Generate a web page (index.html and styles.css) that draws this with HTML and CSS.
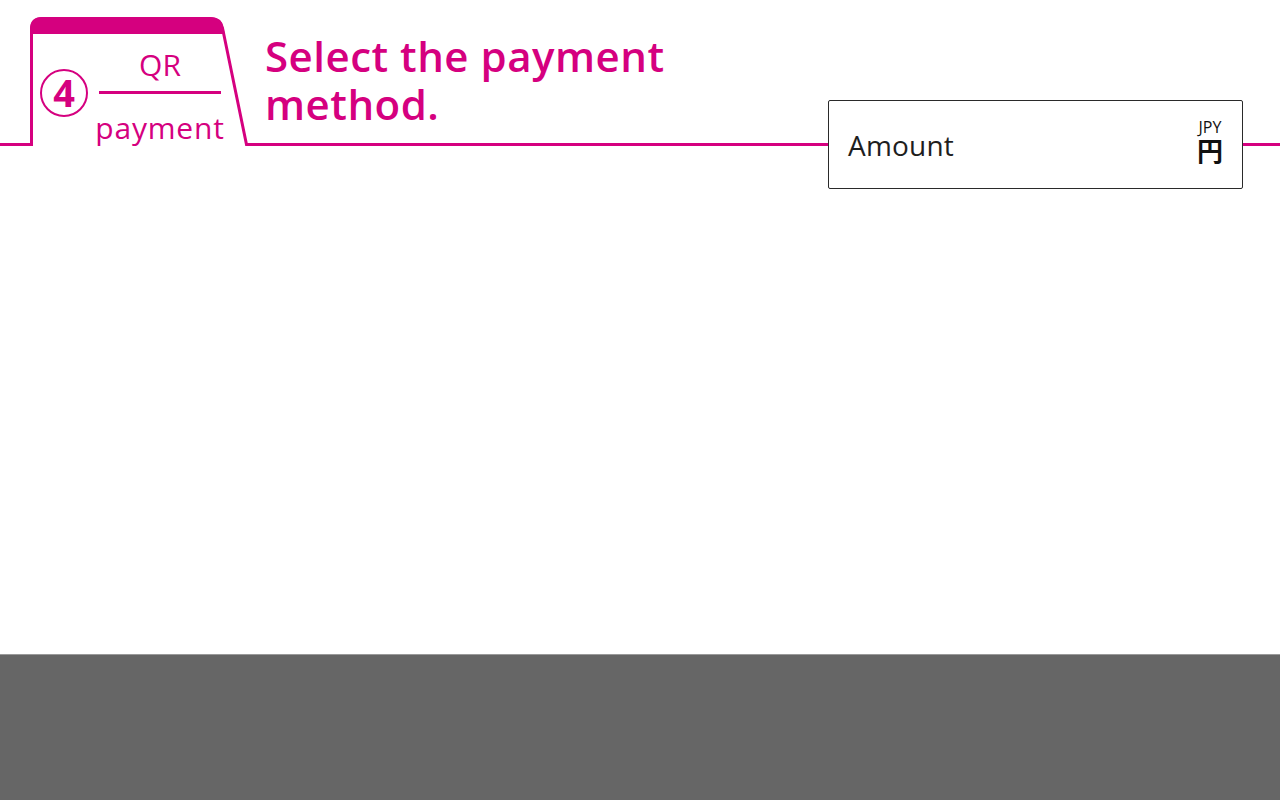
FILE: index.html
```html
<!DOCTYPE html>
<html lang="en">
<head>
<meta charset="utf-8">
<title>QR payment</title>
<link rel="stylesheet" href="styles.css">
</head>
<body>
<div class="page">
  <main class="main">
    <header class="top">
      <div class="tab">
        <svg class="tab-shape" width="248" height="146" viewBox="0 0 248 146" aria-hidden="true">
          <path d="M0 144.5 H31.5 V30 Q31.5 18.5 43 18.5 H210 Q220.5 18.5 222.5 28 L246.5 144.5 H248" fill="none" stroke="#d5007f" stroke-width="3"/>
          <path d="M30 34 V29 Q30 17 42 17 H210 Q221.5 17 223.5 28 L224.8 34 Z" fill="#d5007f"/>
        </svg>
        <div class="tab-content">
          <div class="step">4</div>
          <div class="fraction">
            <span class="frac-top">QR</span>
            <span class="frac-rule"></span>
            <span class="frac-bottom">payment</span>
          </div>
        </div>
      </div>
      <div class="title-area">
        <h1 class="title">Select the payment<br>method.</h1>
      </div>
      <div class="amount-box">
        <span class="amount-label">Amount</span>
        <span class="currency">
          <span class="currency-code">JPY</span>
          <span class="currency-sign">円</span>
        </span>
      </div>
      <div class="rule-tail"></div>
    </header>
  </main>
  <footer class="footer"></footer>
</div>
</body>
</html>
```

FILE: styles.css
```css
* { box-sizing: border-box; }

html, body {
  margin: 0;
  padding: 0;
  background: #ffffff;
}

body {
  font-family: "Open Sans", "Noto Sans", "Noto Sans CJK JP", sans-serif;
}

.page {
  width: 1280px;
  height: 800px;
  display: flex;
  flex-direction: column;
}

.main {
  flex: 1;
}

.top {
  display: flex;
  align-items: flex-start;
}

/* ---- tab ---- */
.tab {
  position: relative;
  flex: 0 0 248px;
  height: 146px;
}

.tab-shape {
  position: absolute;
  left: 0;
  top: 0;
}

.tab-content {
  position: relative;
  display: flex;
  align-items: flex-start;
  padding: 69px 0 0 40px;
  gap: 11px;
}

.step {
  width: 48px;
  height: 48px;
  border: 2px solid #d5007f;
  border-radius: 50%;
  color: #d5007f;
  font-size: 38px;
  font-weight: 700;
  line-height: 43px;
  text-align: center;
}

.fraction {
  margin-top: -19px;
  width: 122px;
  display: flex;
  flex-direction: column;
  align-items: center;
  color: #d5007f;
}

.frac-top,
.frac-bottom {
  font-size: 30px;
  line-height: 30px;
  font-weight: 500;
}

.frac-rule {
  display: block;
  width: 122px;
  height: 3px;
  background: #d5007f;
  margin-top: 11px;
  margin-bottom: 19px;
}

.frac-bottom {
  letter-spacing: 0.8px;
}

/* ---- title ---- */
.title-area {
  flex: 1;
  min-width: 0;
  height: 146px;
  border-bottom: 3px solid #d5007f;
  padding: 32px 0 0 17px;
}

.title {
  margin: 0;
  color: #d5007f;
  font-size: 42px;
  line-height: 48px;
  font-weight: 600;
  letter-spacing: 0.5px;
  white-space: nowrap;
}

/* ---- amount ---- */
.amount-box {
  flex: 0 0 415px;
  margin-top: 100px;
  height: 89px;
  border: 1px solid #2a2a2a;
  border-radius: 2px;
  display: flex;
  align-items: center;
  justify-content: space-between;
  padding: 0 19px 0 19px;
}

.amount-label {
  font-size: 28px;
  color: #1e1e1e;
  letter-spacing: 0.2px;
}

.currency {
  display: flex;
  flex-direction: column;
  align-items: center;
  color: #111;
  margin-top: -6px;
}

.currency-code {
  font-size: 16px;
  line-height: 17px;
}

.currency-sign {
  font-family: "Noto Sans CJK JP", sans-serif;
  font-size: 26px;
  line-height: 28px;
  font-weight: 700;
}

.rule-tail {
  flex: 0 0 37px;
  height: 146px;
  border-bottom: 3px solid #d5007f;
}

/* ---- footer ---- */
.footer {
  flex: 0 0 146px;
  background: #666666;
  border-top: 1px solid #9a9a9a;
}
```
